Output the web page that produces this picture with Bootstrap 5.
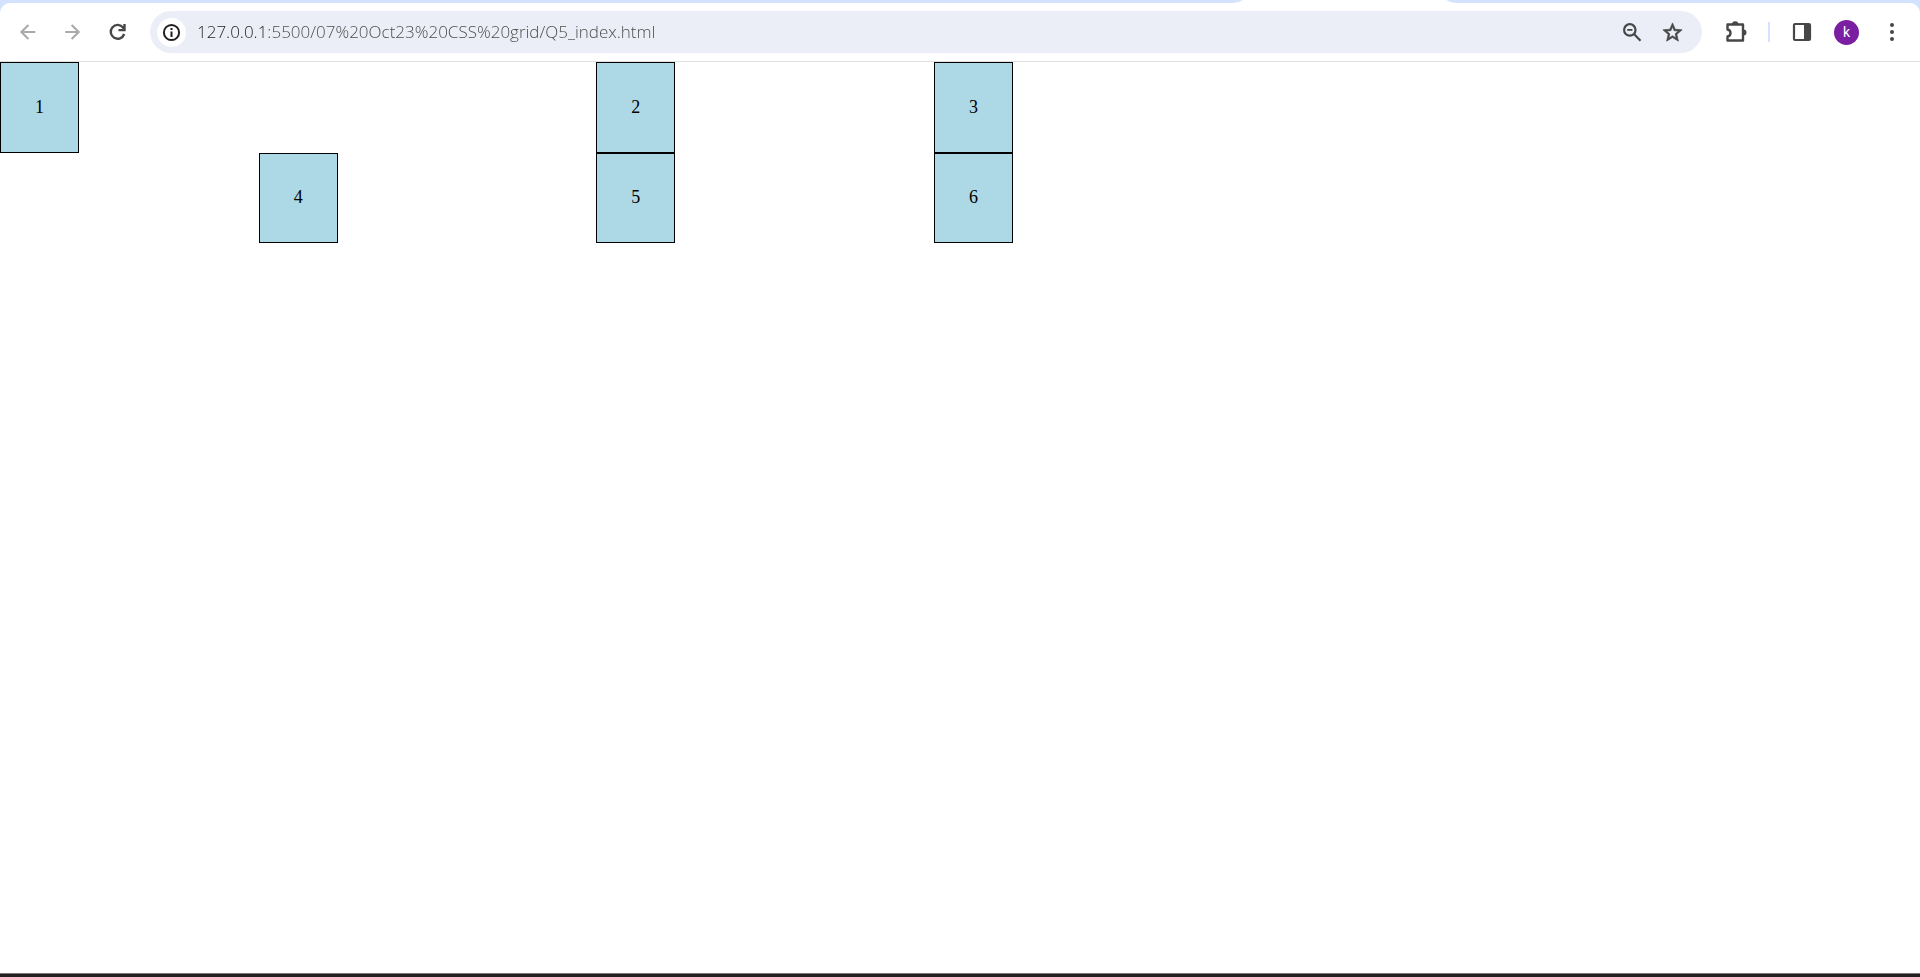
<!DOCTYPE html>
<html lang="en">
<head>
<meta charset="utf-8">
<meta name="viewport" content="width=device-width, initial-scale=1">
<title>Q5_index.html</title>
<link href="https://cdn.jsdelivr.net/npm/bootstrap@5.3.0/dist/css/bootstrap.min.css" rel="stylesheet">
<style>
  body { background: #fff; font-family: "Open Sans", "Noto Sans", sans-serif; }
  .tab-strip { height: 3px; background: #d3e3fd; padding-left: 64.2%; }
  .toolbar-wrap { background: #d3e3fd; }
  .toolbar { height: 59px; padding: 0 6px 0 5px; background: #fff; border-bottom: 1px solid #dfe1e1; border-radius: 10px 10px 0 0; }
  .tool-btn { width: 45px; height: 42px; color: #474747; }
  .tool-btn:disabled { color: #aaa; opacity: 1; border: 0; }
  .omnibox { height: 42px; margin: 0 10px; padding: 0 10px 0 7px; background: #ebeef7; border-radius: 21px; }
  .omnibox .tool-btn { width: 40px; }
  .site-info { width: 29px; height: 29px; background: #fff; color: #1f1f1f; }
  .address { margin-left: 11px; font-size: 17px; font-weight: 300; line-height: 24px; outline: 0;
    background: linear-gradient(90deg, #1f1f1f 68px, #474747 68px); -webkit-background-clip: text; background-clip: text; color: transparent; }
  .divider { width: 2px; height: 20px; margin: 0 9px 0 11px; background: #d3e3fd; }
  .avatar { width: 25px; height: 25px; background: #7b1fa2; color: #fff; font-family: Roboto, sans-serif; font-size: 14px; line-height: 25px; }
  .cells { display: grid; grid-template-columns: repeat(3, 1fr); grid-template-rows: 91px 90px; max-width: 1013px; }
  .cell { width: 79px; padding-bottom: 2px; justify-self: end; background: lightblue; border: 1px solid #000; color: #000; font-family: "Liberation Serif", serif; font-size: 18px; line-height: 20px; }
  .cell-first { grid-area: 1 / 1; justify-self: start; }
  .taskbar-edge { height: 4px; background: #231f20; border-top: 1px solid #777; }
</style>
</head>
<body class="d-flex flex-column min-vh-100">
  <header>
    <div class="tab-strip d-flex">
      <svg width="223" height="3" viewBox="0 0 223 3" aria-hidden="true"><path fill="#fff" d="M0 3Q6 2.500 10 0H213Q217 2.500 223 3Z"/></svg>
    </div>
    <div class="toolbar-wrap">
      <nav class="toolbar d-flex align-items-center" aria-label="Browser toolbar">
        <button class="tool-btn btn p-0 d-flex align-items-center justify-content-center" disabled aria-label="Back">
          <svg width="22" height="22" viewBox="0 0 24 24" fill="none" stroke="currentColor" stroke-width="2.300"><path d="M20 12H5M12.500 4.300 4.800 12l7.700 7.700"/></svg>
        </button>
        <button class="tool-btn btn p-0 d-flex align-items-center justify-content-center" disabled aria-label="Forward">
          <svg width="22" height="22" viewBox="0 0 24 24" fill="none" stroke="currentColor" stroke-width="2.300"><path d="M3.500 12H18M10.500 4.300 18.200 12l-7.700 7.700"/></svg>
        </button>
        <button class="tool-btn btn p-0 d-flex align-items-center justify-content-center" aria-label="Reload">
          <svg width="22" height="22" viewBox="0 0 22 22" fill="none" stroke="currentColor" stroke-width="2.400"><path d="M17.200 13A6.900 6.900 0 1 1 16.200 6.700L17.500 8.900M17.500 3V9.100H11.500"/></svg>
        </button>
        <div class="omnibox d-flex align-items-center flex-grow-1">
          <button class="site-info btn p-0 border-0 rounded-circle d-flex align-items-center justify-content-center flex-shrink-0" aria-label="View site information">
            <svg width="19" height="19" viewBox="0 0 19 19" fill="none" stroke="currentColor" stroke-width="2"><circle cx="9.500" cy="9.500" r="7.600"/><path d="M9.500 8.500V14M9.500 5V7"/></svg>
          </button>
          <input class="address border-0 p-0 flex-grow-1" type="text" aria-label="Address" value="127.0.0.1:5500/07%20Oct23%20CSS%20grid/Q5_index.html">
          <button class="tool-btn btn p-0 d-flex align-items-center justify-content-center" aria-label="Zoom">
            <svg width="22" height="22" viewBox="0 0 22 22" fill="none" stroke="currentColor" stroke-width="2.200"><circle cx="8.800" cy="8.900" r="5.700"/><path d="M13 13l6.500 6.700"/><path d="M6.200 8.900h5.200" stroke-width="1.800"/></svg>
          </button>
          <button class="tool-btn btn p-0 d-flex align-items-center justify-content-center" aria-label="Bookmark this page">
            <svg width="23" height="23" viewBox="0 0 24 24" fill="currentColor"><path d="M22 9.240l-7.190-.62L12 2 9.190 8.630 2 9.240l5.460 4.730L5.820 21 12 17.270 18.180 21l-1.630-7.030L22 9.240zM12 15.400l-3.760 2.270 1-4.280-3.320-2.880 4.380-.38L12 6.100l1.710 4.040 4.380.38-3.320 2.880 1 4.280L12 15.400z" stroke="currentColor" stroke-width=".7"/></svg>
          </button>
        </div>
        <button class="tool-btn btn p-0 d-flex align-items-center justify-content-center" aria-label="Extensions">
          <svg width="24" height="24" viewBox="0 0 24 24"><path fill="none" stroke="currentColor" stroke-width="2.400" stroke-linejoin="round" d="M4.500 4.500H20V20.500H4.500V16.500C8.500 15.800 8.500 10.200 4.500 9.500Z"/><path fill="currentColor" d="M9 4.500a3.200 3.200 0 0 1 6.400 0ZM20.500 9.500a3 3 0 0 1 0 6Z"/></svg>
        </button>
        <span class="divider"></span>
        <button class="tool-btn btn p-0 d-flex align-items-center justify-content-center" aria-label="Side panel">
          <svg width="22" height="22" viewBox="0 0 22 22"><rect x="3" y="3" width="16" height="16" rx="1" fill="none" stroke="currentColor" stroke-width="2.200"/><path fill="currentColor" d="M13 3h6v16h-6z"/></svg>
        </button>
        <button class="tool-btn btn p-0 d-flex align-items-center justify-content-center" aria-label="Profile"><span class="avatar rounded-circle">k</span></button>
        <button class="tool-btn btn p-0 d-flex align-items-center justify-content-center" aria-label="Menu">
          <svg width="20" height="20" viewBox="0 0 20 20" fill="currentColor"><circle cx="10" cy="3" r="2"/><circle cx="10" cy="10" r="2"/><circle cx="10" cy="17" r="2"/></svg>
        </button>
      </nav>
    </div>
  </header>
  <main class="flex-grow-1">
    <div class="cells">
      <div class="cell cell-first d-flex align-items-center justify-content-center">1</div>
      <div class="cell d-flex align-items-center justify-content-center">2</div>
      <div class="cell d-flex align-items-center justify-content-center">3</div>
      <div class="cell d-flex align-items-center justify-content-center">4</div>
      <div class="cell d-flex align-items-center justify-content-center">5</div>
      <div class="cell d-flex align-items-center justify-content-center">6</div>
    </div>
  </main>
  <footer class="taskbar-edge"></footer>
<script src="https://cdn.jsdelivr.net/npm/bootstrap@5.3.0/dist/js/bootstrap.bundle.min.js"></script>
</body>
</html>
